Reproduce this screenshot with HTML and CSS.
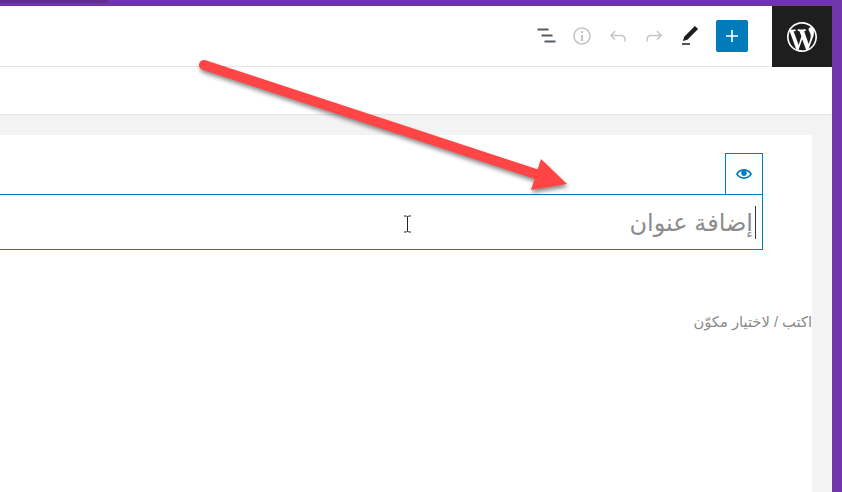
FILE: index.html
```html
<!DOCTYPE html>
<html lang="ar">
<head>
  <meta charset="UTF-8">
  <meta name="viewport" content="width=device-width, initial-scale=1.0">
  <title>إضافة عنوان</title>
  <link rel="stylesheet" href="styles.css">
</head>
<body>
  <div class="topbar"><div class="topbar-progress"></div></div>
  <div class="shell">
    <div class="main">
      <!-- Editor toolbar -->
      <header class="header">
        <button class="tool dark"><svg viewBox="0 0 24 24" width="24" height="24"><path d="M5 5h11v2H5zM9 11h11v2H9zM12 17h11v2H12z" transform="translate(-1.5 -.5)"/></svg></button>
        <button class="tool muted"><svg viewBox="0 0 24 24" width="24" height="24"><path d="M12 3.2c-4.8 0-8.8 3.9-8.8 8.8 0 4.8 3.9 8.8 8.8 8.8 4.8 0 8.8-3.9 8.8-8.8 0-4.8-4-8.8-8.8-8.8zm0 16c-4 0-7.2-3.3-7.2-7.2C4.8 8 8 4.8 12 4.8s7.2 3.3 7.2 7.2c0 4-3.2 7.2-7.2 7.2zM11 17h2v-6h-2v6zm0-8h2V7h-2v2z"/></svg></button>
        <button class="tool muted"><svg viewBox="0 0 24 24" width="24" height="24"><path d="M18.3 11.7c-.6-.6-1.4-.9-2.3-.9H6.7l2.9-3.3-1.1-1-4.5 5L8.5 16l1-1-2.7-2.7H16c.5 0 .9.2 1.3.5 1 1 1 3.4 1 4.5v.3h1.5v-.2c0-1.5 0-4.3-1.5-5.7z"/></svg></button>
        <button class="tool muted"><svg viewBox="0 0 24 24" width="24" height="24"><path d="M15.6 6.5l-1.1 1 2.9 3.3H8c-.9 0-1.7.3-2.3.9-1.4 1.5-1.4 4.2-1.4 5.6v.2h1.5v-.3c0-1.1 0-3.5 1-4.5.3-.3.7-.5 1.3-.5h9.2L14.5 15l1.1 1.1 4.6-4.6-4.6-5z"/></svg></button>
        <button class="tool black"><svg viewBox="0 0 24 24" width="24" height="24"><path d="M20.1 5.1L16.9 2 6.2 12.7l-1.3 4.4 4.5-1.3L20.1 5.1zM4 20.8h8v-1.5H4v1.5z"/></svg></button>
        <button class="add"><svg viewBox="0 0 24 24" width="24" height="24"><path d="M18 11.2h-5.2V6h-1.6v5.2H6v1.6h5.2V18h1.6v-5.2H18z"/></svg></button>
        <div class="wp-logo"><svg viewBox="0 0 20 20" width="36" height="36"><path d="M20 10c0-5.51-4.49-10-10-10C4.48 0 0 4.49 0 10c0 5.52 4.48 10 10 10 5.51 0 10-4.48 10-10zM7.78 15.37L4.37 6.22c.55-.02 1.17-.08 1.17-.08.5-.06.44-1.13-.06-1.11 0 0-1.45.11-2.37.11-.18 0-.37 0-.58-.01C4.12 2.69 6.87 1.11 10 1.11c2.33 0 4.45.87 6.05 2.34-.68-.11-1.65.39-1.65 1.58 0 .74.45 1.36.9 2.1.35.61.55 1.36.55 2.46 0 1.49-1.4 5-1.4 5l-3.03-8.37c.54-.02.82-.17.82-.17.5-.05.44-1.25-.06-1.22 0 0-1.44.12-2.38.12-.87 0-2.33-.12-2.33-.12-.5-.03-.56 1.2-.06 1.22l.92.08 1.26 3.41zM17.41 10c.24-.64.74-1.87.43-4.25.7 1.29 1.05 2.71 1.05 4.25 0 3.29-1.73 6.24-4.4 7.78.97-2.59 1.94-5.2 2.92-7.78zM6.1 18.09C3.12 16.65 1.11 13.53 1.11 10c0-1.3.23-2.48.72-3.59C3.25 10.3 4.67 14.2 6.1 18.09zm4.03-6.63l2.58 6.98c-.86.29-1.76.45-2.71.45-.79 0-1.57-.11-2.29-.33.81-2.38 1.62-4.74 2.42-7.1z"/></svg></div>
      </header>
      <div class="subbar"></div>
      <div class="canvas">
        <section class="editor">
          <div class="title-block">
            <div class="mover"><svg viewBox="0 0 20 20" width="16" height="16"><path d="M19.7 9.4C17.7 6 14 3.9 10 3.9S2.3 6 .3 9.4L0 10l.3.6c2 3.4 5.7 5.5 9.7 5.5s7.7-2.1 9.7-5.5l.3-.6-.3-.6zM10 14.1c-3.1 0-6-1.6-7.7-4.1C3.6 8 5.7 6.6 8 6.1c-.9.6-1.5 1.7-1.5 2.9 0 1.9 1.6 3.5 3.5 3.5s3.5-1.6 3.5-3.5c0-1.2-.6-2.3-1.5-2.9 2.3.5 4.4 1.9 5.7 3.9-1.7 2.5-4.6 4.1-7.7 4.1z"/></svg></div>
            <div class="title-box">
              <span class="caret"></span>
              <span class="title-text">إضافة عنوان</span>
            </div>
          </div>
          <p class="appender">اكتب / لاختيار مكوّن</p>
        </section>
      </div>
    </div>
    <div class="side-edge"></div>
  </div>

  <!-- Annotation drawn on top of the screenshot -->
  <svg class="arrow" viewBox="0 0 842 492" width="842" height="492">
    <line x1="204" y1="65" x2="545" y2="177" stroke="#ff4545" stroke-width="10" stroke-linecap="round"/>
    <path d="M541 159L567 184L531 190Z" fill="#ff4545"/>
  </svg>
  <svg class="ibeam" viewBox="0 0 9 18" width="9" height="18">
    <path d="M1 1h2.5l1 1 1-1H8M4.5 2v14M1 17h2.5l1-1 1 1H8" fill="none" stroke="#222" stroke-width="1"/>
  </svg>
</body>
</html>
```

FILE: styles.css
```css
* {
  box-sizing: border-box;
}

body {
  display: flex;
  flex-direction: column;
  width: 842px;
  height: 492px;
  margin: 0;
  overflow: hidden;
  position: relative;
  font-family: "Liberation Sans", "DejaVu Sans", sans-serif;
  background-color: #fff;
}

.topbar {
  height: 6px;
  flex: none;
  background-color: #7035ab;
}

.topbar-progress {
  width: 108px;
  height: 3px;
  background-color: #5f2f92;
}

.shell {
  display: flex;
  flex: 1;
  min-height: 0;
}

.main {
  display: flex;
  flex-direction: column;
  flex: 1;
  min-width: 0;
}

.side-edge {
  width: 10px;
  flex: none;
  background-color: #7035ab;
}

.header {
  display: flex;
  align-items: center;
  justify-content: flex-end;
  height: 61px;
  flex: none;
  border-bottom: 1px solid #e2e4e7;
  background-color: #fff;
}

.tool {
  display: flex;
  align-items: center;
  justify-content: center;
  width: 36px;
  height: 36px;
  padding: 0;
  border: none;
  background: none;
}

.tool.dark svg {
  fill: #555d66;
}

.tool.muted svg {
  fill: #c4c6c9;
}

.tool.black svg {
  fill: #1e1e1e;
}

.add {
  display: flex;
  align-items: center;
  justify-content: center;
  width: 32px;
  height: 32px;
  margin: 0 24px 0 8px;
  padding: 0;
  border: none;
  border-radius: 2px;
  background-color: #007cba;
}

.add svg {
  fill: #fff;
}

.wp-logo {
  display: flex;
  align-items: center;
  justify-content: center;
  width: 60px;
  height: 61px;
  padding-top: 1px;
  background-color: #1e1e1e;
}

.wp-logo svg {
  width: 30px;
  height: 30px;
  fill: #fff;
}

.subbar {
  height: 48px;
  flex: none;
  border-bottom: 1px solid #e2e4e7;
  background-color: #fff;
}

.canvas {
  flex: 1;
  min-height: 0;
  padding: 20px 20px 0 0;
  background-color: #f3f3f4;
}

.editor {
  height: 100%;
  padding-top: 18px;
  background-color: #fff;
}

.title-block {
  display: flex;
  flex-direction: column;
  align-items: flex-end;
  margin-right: 49px;
}

.mover {
  display: flex;
  align-items: center;
  justify-content: center;
  width: 38px;
  height: 42px;
  margin-bottom: -1px;
  border: 1px solid #007cba;
}

.mover svg {
  fill: #007cba;
}

.title-box {
  display: flex;
  align-items: center;
  justify-content: flex-start;
  flex-direction: row-reverse;
  gap: 2px;
  width: 100%;
  height: 56px;
  padding-right: 6px;
  border: 1px solid #007cba;
  border-left: none;
}

.caret {
  width: 1px;
  height: 33px;
  background-color: #32373c;
}

.title-text {
  font-size: 24px;
  line-height: 33px;
  color: #8c8c8c;
}

.appender {
  margin: 63px 0 0;
  font-size: 14.7px;
  line-height: 18px;
  color: #8a8a8a;
  text-align: right;
}

.arrow {
  position: absolute;
  top: 0;
  left: 0;
  filter: drop-shadow(1px 3px 2px rgba(0, 0, 0, 0.45));
}

.ibeam {
  position: absolute;
  top: 215px;
  left: 403px;
}
```
